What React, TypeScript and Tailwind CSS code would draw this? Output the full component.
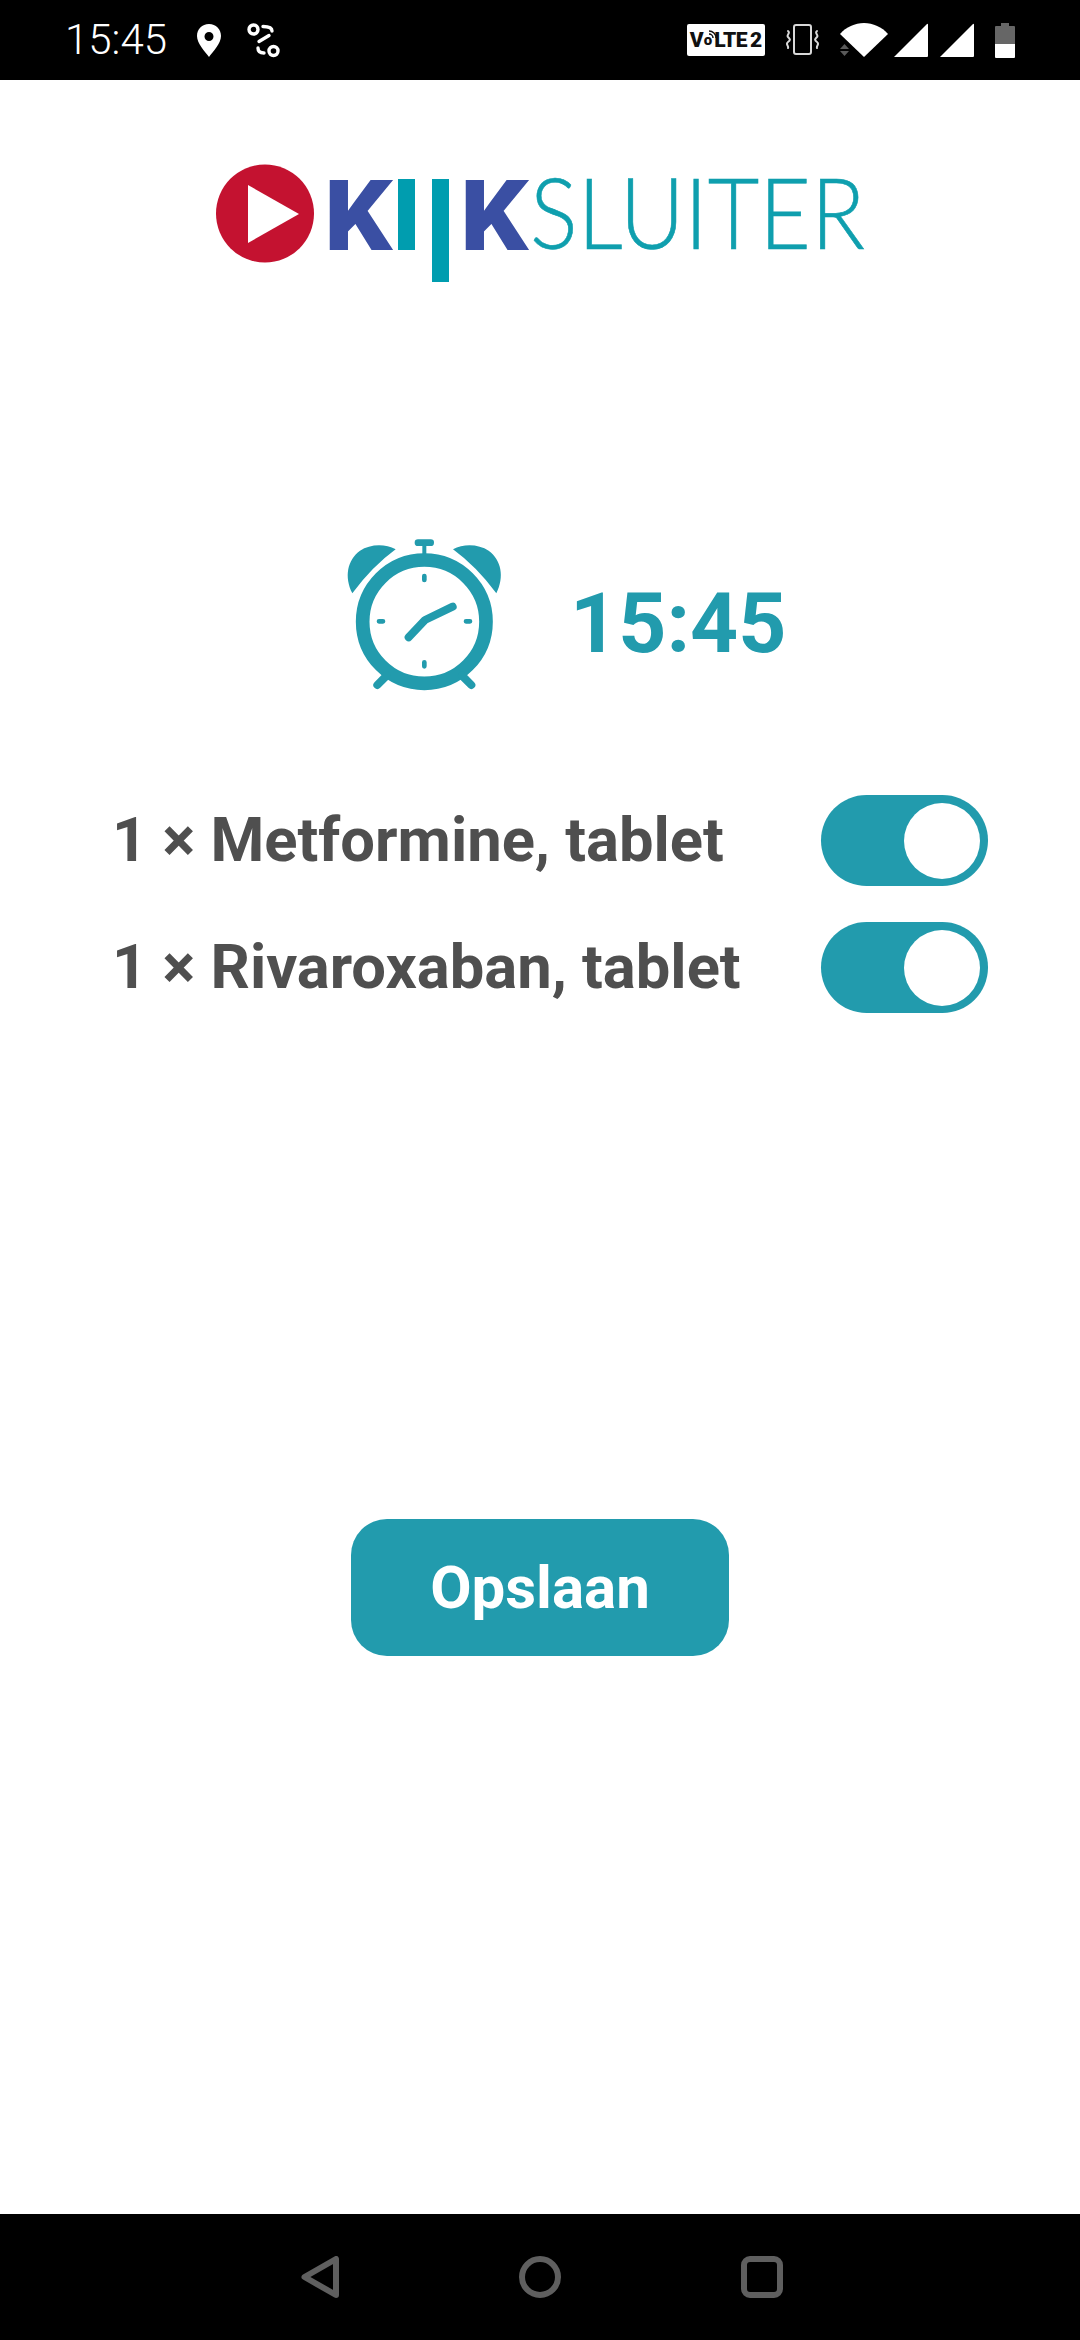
const roboto = "font-['Roboto',sans-serif]"

const StatusBar = () => (
  <div className="relative flex h-[80px] shrink-0 items-center bg-black text-white">
    <span className="ml-[65px] font-['Roboto',sans-serif] text-[42px] leading-none font-light">15:45</span>
    {/* location pin */}
    <svg className="ml-[30px]" width="24" height="33" viewBox="0 0 24 33">
      <path fillRule="evenodd" fill="#fff" d="M12 0C5 0 0 5.300 0 12c0 7.500 8 15.500 12 21 4-5.500 12-13.500 12-21C24 5.300 19 0 12 0zm0 8a4.500 4.500 0 1 1 0 9 4.500 4.500 0 0 1 0-9z" />
    </svg>
    {/* route icon */}
    <svg className="ml-[26px]" width="34" height="35" viewBox="0 0 34 35" fill="none" stroke="#fff" strokeWidth="3.400" strokeLinecap="round">
      <circle cx="6.500" cy="6.500" r="4.500" />
      <circle cx="26.500" cy="28" r="4.500" />
      <path d="M16 3.500c5 0 9 .5 9 4.500M22 12.500l-10 6M11 25c0 3 2 5 6 5" />
    </svg>
    <div className="ml-auto flex items-center">
      {/* volte badge */}
      <div className="flex h-[32px] w-[78px] items-center justify-center rounded-[2px] bg-white font-['Roboto',sans-serif] text-[21px] leading-none font-black text-[#111]">
        <span>V</span>
        <span className="relative text-[15px]">
          o
          <svg className="absolute -top-[3px] left-[3px]" width="10" height="10" viewBox="0 0 10 10" fill="none" stroke="#111" strokeWidth="1.500">
            <path d="M2 4a4 4 0 0 1 4 4M2 1a7 7 0 0 1 7 7" />
          </svg>
        </span>
        <span className="ml-[2px] tracking-[-0.5px]">LTE</span>
        <span className="ml-[3px]">2</span>
      </div>
      {/* vibrate */}
      <svg className="ml-[20px]" width="36" height="32" viewBox="0 0 36 32" fill="none" stroke="#d8d8d8" strokeLinecap="round">
        <rect x="9" y="1" width="17" height="29" rx="2" strokeWidth="2" />
        <path strokeWidth="2" d="M3 7c3 2-2 4 0 6s3 3 0 5 1 4 0 6M32 7c-3 2 2 4 0 6s-3 3 0 5-1 4 0 6" />
      </svg>
      {/* wifi */}
      <svg className="ml-[19px]" width="48" height="35" viewBox="0 0 48 35">
        <path fill="#fff" d="M0 11C6 4 15 0 24 0s18 4 24 11L24 34z" />
        <path fill="#5a5a5a" d="M0 26l4.500-5 4.500 5zM0 28l4.500 5 4.500-5z" />
      </svg>
      {[0, 1].map((i) => (
        <svg key={i} className={i === 0 ? "ml-[6px]" : "ml-[12px]"} width="34" height="34" viewBox="0 0 34 34">
          <path fill="#fff" d="M0 34L33 1a.6.6 0 0 1 1 .5V33a1 1 0 0 1-1 1z" />
        </svg>
      ))}
      {/* battery */}
      <svg className="mr-[65px] ml-[21px]" width="20" height="35" viewBox="0 0 20 35">
        <path fill="#666" d="M6 0h8v3h5a1 1 0 0 1 1 1v18H0V4a1 1 0 0 1 1-1h5z" />
        <path fill="#fff" d="M0 21h20v13a1 1 0 0 1-1 1H1a1 1 0 0 1-1-1z" />
      </svg>
    </div>
  </div>
)

const Logo = () => (
  <svg width="680" height="160" viewBox="-10 -25 680 160" className="ml-[200px]">
    <circle cx="55" cy="53.500" r="49" fill="#c41230" />
    <path d="M38 25v58l51-29z" fill="#fff" />
    <text x="114" y="90" fontFamily="Roboto, sans-serif" fontWeight="900" fontSize="98" fill="#3a4fa3" textLength="68" lengthAdjust="spacingAndGlyphs">K</text>
    <rect x="188" y="19" width="17" height="71" fill="#009daf" />
    <rect x="222" y="19" width="17" height="103" fill="#009daf" />
    <text x="250" y="90" fontFamily="Roboto, sans-serif" fontWeight="900" fontSize="98" fill="#3a4fa3" textLength="68" lengthAdjust="spacingAndGlyphs">K</text>
    <text x="320" y="89" fontFamily="Lato, sans-serif" fontWeight="300" fontSize="98" fill="#0f9fae" stroke="#0f9fae" strokeWidth="0.6" textLength="335" lengthAdjust="spacingAndGlyphs">SLUITER</text>
  </svg>
)

const AlarmClock = () => (
  <svg width="200" height="180" viewBox="0 0 600 540" fill="none">
    <path fill="#229bad" d="M67 220C42 170 52 120 90 92c30-20 75-22 107-4Q126 140 67 220z" />
    <path fill="#229bad" d="M499 220c25-50 15-100-23-128-30-20-75-22-107-4Q440 140 499 220z" />
    <rect x="254" y="58" width="58" height="20" rx="10" fill="#229bad" />
    <rect x="277" y="70" width="12" height="40" fill="#229bad" />
    <circle cx="283" cy="305" r="185" stroke="#229bad" strokeWidth="41" />
    <g stroke="#229bad" strokeLinecap="round">
      <path strokeWidth="24" d="M142 495l28-28M424 495l-28-28" />
      <path strokeWidth="14" d="M283 168v12M283 427v12M147 304h12M408 304h12" />
      <path strokeWidth="24" strokeLinejoin="round" d="M236 352l49-52 83-40" />
    </g>
  </svg>
)

const Toggle = () => (
  <div className="flex h-[91px] w-[167px] items-center justify-end rounded-full bg-[#229bad] pr-[8px]">
    <div className="h-[76px] w-[76px] rounded-full bg-white" />
  </div>
)

const NavBar = () => (
  <div className="flex h-[126px] shrink-0 items-start bg-black pt-[42px] pl-[301px]">
    <svg width="38" height="42" viewBox="0 0 38 42" fill="none" stroke="#5f5f5f" strokeWidth="6" strokeLinejoin="round">
      <path d="M3.500 21L35 3v36z" />
    </svg>
    <svg className="ml-[180px]" width="42" height="42" viewBox="0 0 42 42" fill="none" stroke="#5f5f5f" strokeWidth="6">
      <circle cx="21" cy="21" r="18" />
    </svg>
    <svg className="ml-[180px]" width="42" height="42" viewBox="0 0 42 42" fill="none" stroke="#5f5f5f" strokeWidth="6">
      <rect x="3" y="3" width="36" height="36" rx="6" />
    </svg>
  </div>
)

export default function App() {
  const meds = ["1 × Metformine, tablet", "1 × Rivaroxaban, tablet"]

  return (
    <div className={`flex h-[2340px] w-[1080px] flex-col overflow-hidden bg-white ${roboto}`}>
      <StatusBar />
      <main className="flex flex-1 flex-col">
        <div className="pt-[55px]">
          <Logo />
        </div>

        {/* alarm time */}
        <div className="mt-[225px] flex items-center pl-[330px]">
          <AlarmClock />
          <span className="ml-[40px] pt-[28px] text-[84px] leading-none font-bold text-[#229bad]">15:45</span>
        </div>

        {/* medicines */}
        <div className="mt-[95px] flex flex-col gap-[36px] pr-[92px] pl-[112px]">
          {meds.map((med, i) => (
            <div key={i} className="flex items-center justify-between">
              <span className="text-[61.500px] leading-none font-bold text-[#4f4f4f]">{med}</span>
              <Toggle />
            </div>
          ))}
        </div>

        <div className="mt-[506px] flex justify-center">
          <button className="h-[137px] w-[378px] rounded-[36px] bg-[#229bad] text-[60px] font-bold text-white">
            Opslaan
          </button>
        </div>
      </main>
      <NavBar />
    </div>
  )
}
